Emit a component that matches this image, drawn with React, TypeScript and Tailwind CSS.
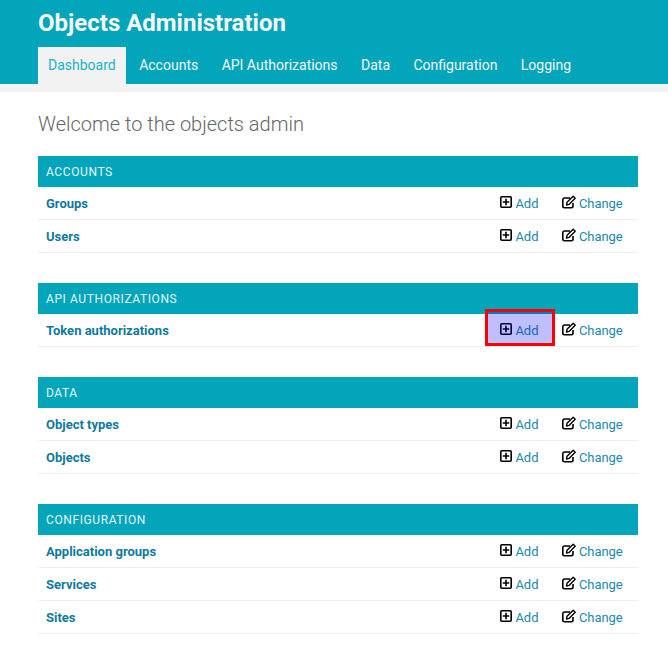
const navItems = ['Dashboard', 'Accounts', 'API Authorizations', 'Data', 'Configuration', 'Logging'];

const sections = [
  { title: 'Accounts', rows: ['Groups', 'Users'] },
  { title: 'API Authorizations', rows: ['Token authorizations'] },
  { title: 'Data', rows: ['Object types', 'Objects'] },
  { title: 'Configuration', rows: ['Application groups', 'Services', 'Sites'] },
];

function PlusIcon() {
  return (
    <svg viewBox="0 0 12 12" className="mr-[3.4px] mb-[2px] ml-[1px] h-[12px] w-[12px] shrink-0 text-[#000000]" fill="none" stroke="currentColor">
      <rect x="0.8" y="0.8" width="10.4" height="10.4" rx="1" strokeWidth="1.6" />
      <path d="M6 2.8v6.4M2.8 6h6.4" strokeWidth="1.6" />
    </svg>
  );
}

function EditIcon() {
  return (
    <svg viewBox="0 0 14 14" className="mr-[3px] mb-[2px] h-[14px] w-[14px] shrink-0 text-[#000000]" fill="none" stroke="currentColor">
      <path d="M11 8v3a1.7 1.7 0 0 1-1.7 1.7H2.5A1.7 1.7 0 0 1 .8 11V4.7A1.7 1.7 0 0 1 2.5 3H8" strokeWidth="1.6" />
      <path d="M4.5 10 5 7.3 11.2 1.2l2 2L7 9.4z" strokeWidth="1.4" strokeLinejoin="round" />
    </svg>
  );
}

function Row({ name }: { name: string }) {
  const highlighted = name === 'Token authorizations';

  return (
    <div className="flex h-[33px] items-center border-b border-[#eeeeee] pl-2 text-[13px]">
      <a className="flex-1 pt-[1px] font-bold text-[#0f7a9e]">{name}</a>
      <div className="relative flex h-full w-[63px] items-center">
        <PlusIcon />
        <a className="pt-[1px] text-[#1a88ad]">Add</a>
        {highlighted && (
          <div className="absolute top-[-5px] left-[-14px] h-[37px] w-[70px] border-[3px] border-[#ff0000] bg-[#0000ff]/25" />
        )}
      </div>
      <div className="flex h-full w-[76px] items-center">
        <EditIcon />
        <a className="pt-[1px] tracking-[-0.1px] text-[#1a88ad]">Change</a>
      </div>
    </div>
  );
}

export default function App() {
  return (
    <div className="min-h-[655px] bg-white font-['Roboto',sans-serif]">
      <header className="h-[84px] bg-[#03a5bb] pl-[38px]">
        <h1 className="pt-[8px] text-[24px] leading-[30px] font-bold text-[#f5f5f5]">Objects Administration</h1>
        <nav className="mt-[9px] flex h-[37px]">
          {navItems.map((item, i) => (
            <a
              key={item}
              className={
                i === 0
                  ? 'flex items-center bg-[#f2f2f2] px-[10px] text-[14px] text-[#19b3c9]'
                  : 'ml-[3.45px] flex items-center px-[10px] text-[14px] text-[#f5f5f5]'
              }
            >
              {item}
            </a>
          ))}
        </nav>
      </header>
      <div className="h-[8px] bg-[#f2f2f2]" />

      <main className="pr-[30px] pl-[38px]">
        <h2 className="mt-[18px] mb-[18px] text-[20px] leading-[28px] font-light text-[#666666]">
          Welcome to the objects admin
        </h2>
        {sections.map((section) => (
          <section key={section.title} className="mb-[30px]">
            <div className="flex h-[31px] items-center bg-[#03a5bb] pl-2 text-[12px] tracking-[0.6px] text-[#e6f6f8] uppercase">
              {section.title}
            </div>
            {section.rows.map((row) => (
              <Row key={row} name={row} />
            ))}
          </section>
        ))}
      </main>
    </div>
  );
}
